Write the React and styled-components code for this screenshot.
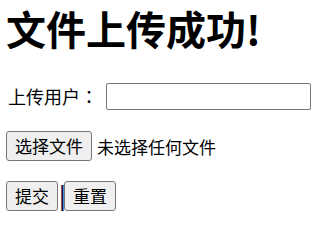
import React from 'react';
import styled, { createGlobalStyle } from 'styled-components';

const GlobalStyle = createGlobalStyle`
  html, body {
    margin: 0;
    padding: 0;
    background: #fff;
  }
  body {
    font-family: "Noto Sans CJK SC", "Noto Sans", sans-serif;
    color: #000;
  }
`;

const Page = styled.div`
  padding: 0 6px;
`;

const Title = styled.h1`
  margin: 0;
  font-size: 40px;
  line-height: 56px;
  font-weight: 700;
`;

const Form = styled.form`
  margin-top: 25px;
  display: flex;
  flex-direction: column;
  gap: 20px;
`;

const Row = styled.div`
  height: 30px;
  display: flex;
  align-items: center;
  gap: ${(p) => p.$gap || 0}px;
  font-size: 17px;
`;

const Label = styled.label`
  padding-left: 2px;
  font-size: 18px;
`;

// the colon sits centred in its box, as in the reference font
const Colon = styled.span`
  font-family: "Noto Sans CJK TC", "Noto Sans CJK SC", sans-serif;
`;

const TextInput = styled.input`
  box-sizing: border-box;
  width: 205px;
  height: 27px;
  border: 1px solid #767676;
  border-radius: 2px;
  background: #fff;
  padding: 0 4px;
  font: inherit;
`;

const Button = styled.button`
  box-sizing: border-box;
  height: 30px;
  padding: 0 8px;
  border: 1px solid #767676;
  border-radius: 3px;
  background: #efefef;
  color: #000;
  font-family: inherit;
  font-size: 17px;
  line-height: 28px;
`;

const FileName = styled.span`
  color: #000;
`;

const Separator = styled.span`
  width: 6px;
  text-align: center;
  font-family: "DejaVu Sans", sans-serif;
  font-size: 26px;
  line-height: 30px;
  color: #10104a;
`;

export default function App() {
  return (
    <Page>
      <GlobalStyle />
      <Title>文件上传成功!</Title>
      <Form onSubmit={(e) => e.preventDefault()}>
        <Row $gap={8}>
          <Label htmlFor="user">
            上传用户<Colon>：</Colon>
          </Label>
          <TextInput id="user" type="text" />
        </Row>
        <Row $gap={5}>
          <Button type="button">选择文件</Button>
          <FileName>未选择任何文件</FileName>
        </Row>
        <Row>
          <Button type="submit">提交</Button>
          <Separator>|</Separator>
          <Button type="reset">重置</Button>
        </Row>
      </Form>
    </Page>
  );
}
